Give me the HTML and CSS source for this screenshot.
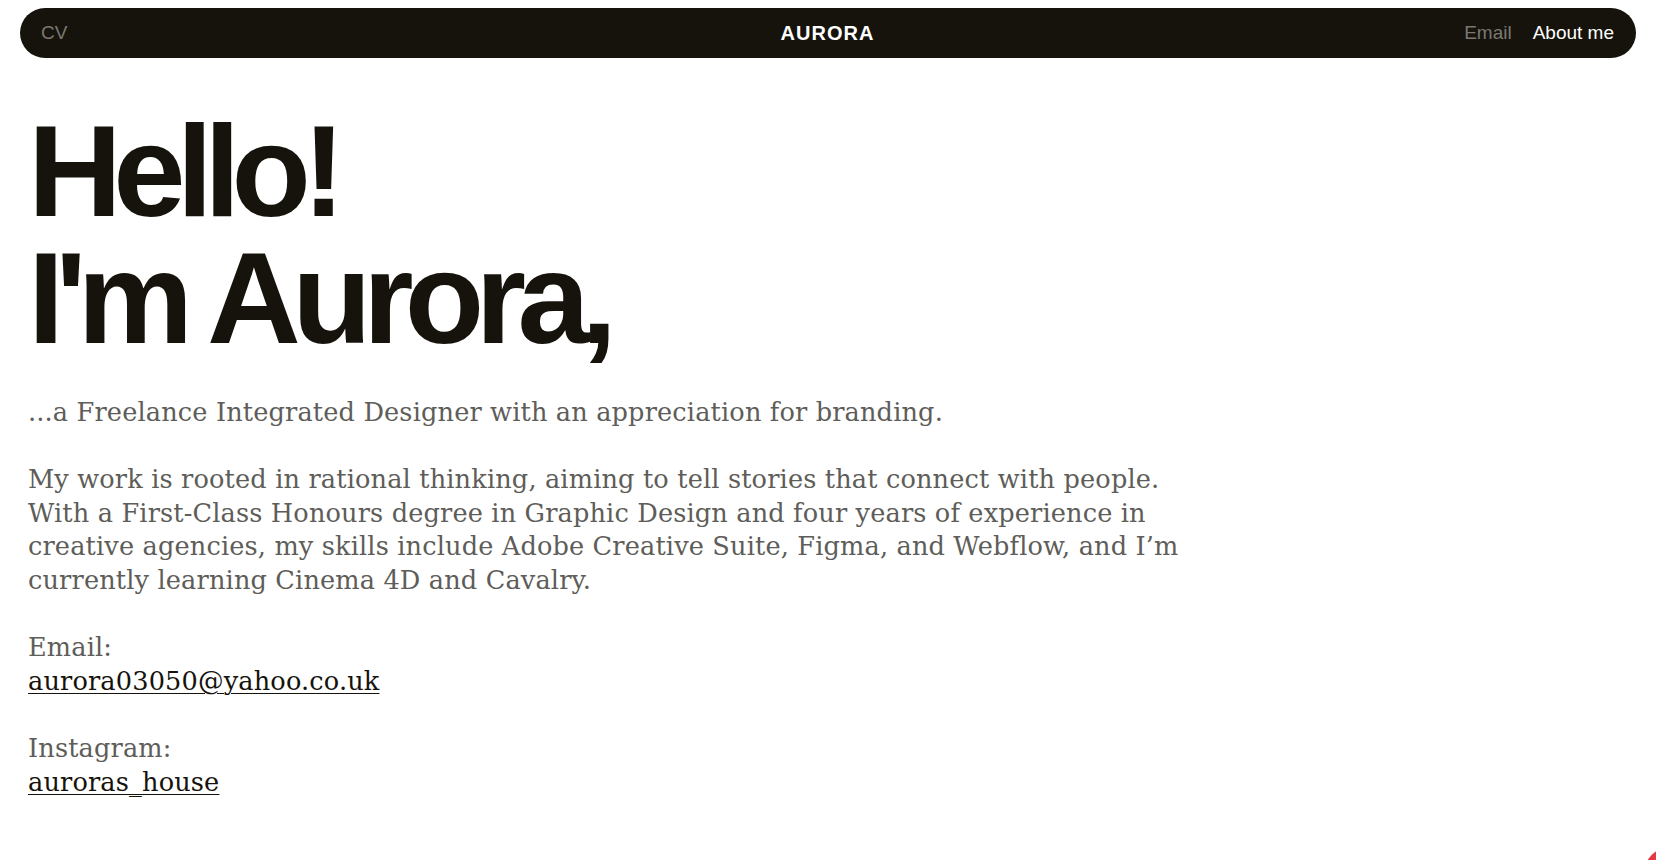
FILE: index.html
```html
<!DOCTYPE html>
<html lang="en">
<head>
<meta charset="utf-8">
<title>Aurora</title>
<link rel="stylesheet" href="styles.css">
</head>
<body>
<header class="topbar">
  <nav class="nav">
    <a class="nav-link muted nav-left" href="#">CV</a>
    <a class="brand" href="#">AURORA</a>
    <div class="nav-right">
      <a class="nav-link muted" href="#">Email</a>
      <a class="nav-link" href="#">About me</a>
    </div>
  </nav>
</header>
<main class="content">
  <h1 class="headline"><span class="headline-line">Hello!</span><span class="headline-line">I'm Aurora,</span></h1>
  <p class="text lead">...a Freelance Integrated Designer with an appreciation for branding.</p>
  <p class="text bio">My work is rooted in rational thinking, aiming to tell stories that connect with people.<br>With a First-Class Honours degree in Graphic Design and four years of experience in<br>creative agencies, my skills include Adobe Creative Suite, Figma, and Webflow, and I’m<br>currently learning Cinema 4D and Cavalry.</p>
  <p class="text contact">Email:<br><a class="link" href="#">aurora03050@yahoo.co.uk</a></p>
  <p class="text contact">Instagram:<br><a class="link" href="#">auroras_house</a></p>
</main>
<div class="corner-dot"></div>
</body>
</html>
```

FILE: styles.css
```css
html, body {
  margin: 0;
  padding: 0;
  background: #ffffff;
  overflow: hidden;
}

body {
  font-family: "Liberation Sans", Arial, sans-serif;
  color: #16130c;
}

.topbar {
  padding: 8px 20px 0 20px;
}

.nav {
  display: grid;
  grid-template-columns: 1fr auto 1fr;
  align-items: center;
  height: 50px;
  padding: 0 22px 0 21px;
  background: #16130c;
  border-radius: 25px;
}

.nav-link {
  font-size: 19px;
  color: #ffffff;
  text-decoration: none;
}

.nav-link.muted {
  color: #7a7873;
}

.nav-left {
  justify-self: start;
}

.brand {
  font-size: 20px;
  font-weight: 700;
  letter-spacing: 1px;
  color: #ffffff;
  text-decoration: none;
}

.nav-right {
  justify-self: end;
  display: flex;
  gap: 21px;
}

.content {
  padding: 0 28px;
}

.headline {
  display: flex;
  flex-direction: column;
  margin: 50px 0 0 0;
  font-size: 130px;
  line-height: 127px;
  font-weight: 700;
  letter-spacing: -0.067em;
  color: #16130c;
}

.headline-line {
  display: block;
  height: 127px;
}

.text {
  margin: 0 0 33.6px 0;
  font-family: "DejaVu Serif", "Liberation Serif", serif;
  font-size: 25.6px;
  letter-spacing: 0.15px;
  line-height: 33.6px;
  color: #5e5d59;
  white-space: nowrap;
}

.lead {
  margin-top: 34px;
}

.link {
  color: #16130c;
  text-decoration: underline;
  text-decoration-thickness: 1px;
  text-underline-offset: 3px;
}

.corner-dot {
  position: fixed;
  right: -47px;
  bottom: -46px;
  width: 60px;
  height: 60px;
  border-radius: 50%;
  background: #e23a42;
}
```
